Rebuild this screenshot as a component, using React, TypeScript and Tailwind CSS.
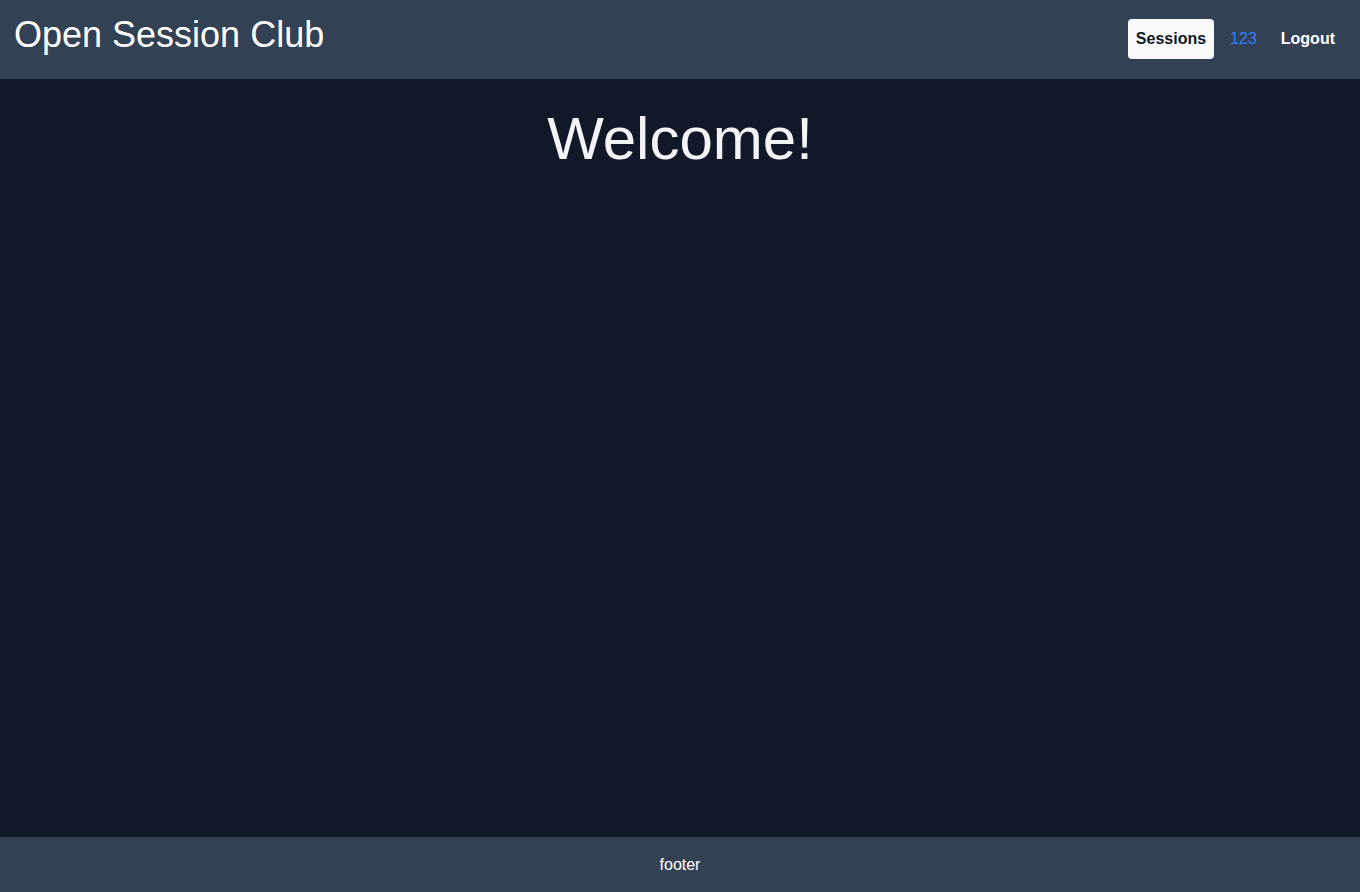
export default function App() {
  return (
    <div
      className="flex min-h-screen flex-col bg-[#111827] text-white"
      style={{ fontFamily: '"Liberation Sans", Arial, sans-serif' }}
    >
      <header className="flex h-[79px] items-center justify-between bg-[#334155] pl-[14px] pr-[17px]">
        <h1 className="mt-[15px] self-start text-4xl leading-10 text-white">
          Open Session Club
        </h1>

        <nav className="mb-[2px] flex items-center gap-2">
          <a
            href="#"
            className="rounded-sm bg-gray-50 px-2 py-2 text-base font-bold text-gray-900"
          >
            Sessions
          </a>
          <a href="#" className="px-2 py-2 text-base font-normal text-blue-500">
            123
          </a>
          <button className="px-2 py-2 text-base font-bold text-white">
            Logout
          </button>
        </nav>
      </header>

      <main className="flex-1">
        <h2 className="mt-[30px] text-center text-6xl leading-none text-gray-100">
          Welcome!
        </h2>
      </main>

      <footer className="flex h-[55px] items-center justify-center bg-[#334155] text-base text-white">
        footer
      </footer>
    </div>
  );
}
